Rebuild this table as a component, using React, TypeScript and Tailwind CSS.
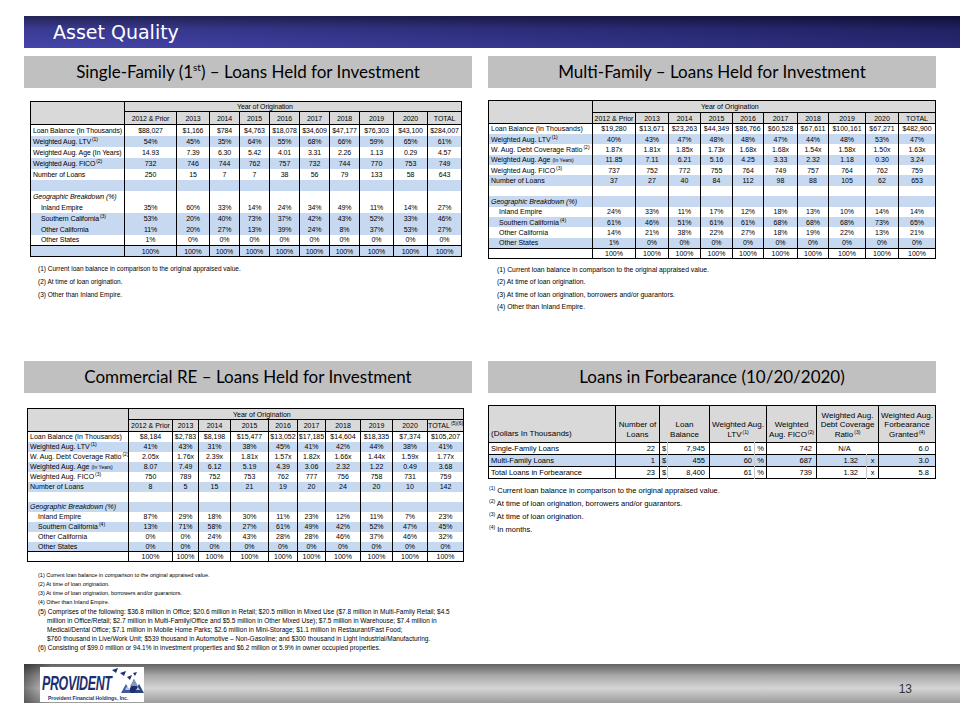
import type { ReactNode } from "react";

type VintageRow = {
  label: ReactNode;
  values: string[];
  blue?: boolean;
  indent?: boolean;
  italic?: boolean;
  total?: boolean;
};

const YEARS = ["2012 & Prior", "2013", "2014", "2015", "2016", "2017", "2018", "2019", "2020"];
const EMPTY = Array(10).fill("");
const FULL = Array(10).fill("100%");
const ZEROS = ["1%", "0%", "0%", "0%", "0%", "0%", "0%", "0%", "0%", "0%"];

function Sup({ children }: { children: ReactNode }) {
  return <sup className="top-[-3px] ml-px text-[5px]">{children}</sup>;
}

function SectionHeader({ children }: { children: ReactNode }) {
  return (
    <div className="flex h-8 items-center justify-center bg-[#c0c0c0] font-['Lato',sans-serif] text-[17px] text-black">
      {children}
    </div>
  );
}

function VintageTable({
  cols,
  rows,
  total,
  tableClass,
  head1,
  head2,
  rowH,
  yearPad,
}: {
  cols: string[];
  rows: VintageRow[];
  total: ReactNode;
  tableClass: string;
  head1: string;
  head2: string;
  rowH: string;
  yearPad: string;
}) {
  return (
    <table className={`table-fixed border-collapse border border-black leading-none ${tableClass}`}>
      <colgroup>
        {cols.map((c, i) => (
          <col key={i} className={c} />
        ))}
      </colgroup>
      <tbody>
        <tr className={`${head1} bg-[#d9d9d9]`}>
          <td rowSpan={2} className="border-r border-b border-black p-0" />
          <td colSpan={10} className={`border-b border-black p-0 text-left whitespace-nowrap ${yearPad}`}>
            Year of Origination
          </td>
        </tr>
        <tr className={`${head2} bg-[#d9d9d9]`}>
          {[...YEARS, total].map((y, i) => (
            <td key={i} className="border-l border-b border-black p-0 text-center whitespace-nowrap">
              {y}
            </td>
          ))}
        </tr>
        {rows.map((r, i) => (
          <tr key={i} className={`${rowH} ${r.blue ? "bg-[#c6d9f1]" : "bg-white"}`}>
            <td
              className={`overflow-hidden whitespace-nowrap p-0 ${r.indent ? "pl-[10px]" : "pl-[2px]"} ${
                r.italic ? "italic" : ""
              } ${r.total ? "border-t border-black" : ""}`}
            >
              {r.label}
            </td>
            {r.values.map((v, j) => (
              <td
                key={j}
                className={`border-l border-black p-0 text-center whitespace-nowrap ${r.total ? "border-t" : ""}`}
              >
                {v}
              </td>
            ))}
          </tr>
        ))}
      </tbody>
    </table>
  );
}

const sfRows: VintageRow[] = [
  {
    label: "Loan Balance (In Thousands)",
    values: ["$88,027", "$1,166", "$784", "$4,763", "$18,078", "$34,609", "$47,177", "$76,303", "$43,100", "$284,007"],
  },
  {
    label: (
      <>
        Weighted Aug. LTV<Sup>(1)</Sup>
      </>
    ),
    values: ["54%", "45%", "35%", "64%", "55%", "68%", "66%", "59%", "65%", "61%"],
    blue: true,
  },
  {
    label: "Weighted Aug. Age (In Years)",
    values: ["14.93", "7.39", "6.30", "5.42", "4.01", "3.31", "2.26", "1.13", "0.29", "4.57"],
  },
  {
    label: (
      <>
        Weighted Aug. FICO<Sup>(2)</Sup>
      </>
    ),
    values: ["732", "746", "744", "762", "757", "732", "744", "770", "753", "749"],
    blue: true,
  },
  { label: "Number of Loans", values: ["250", "15", "7", "7", "38", "56", "79", "133", "58", "643"] },
  { label: "", values: EMPTY, blue: true },
  { label: "Geographic Breakdown (%)", values: EMPTY, italic: true },
  {
    label: "Inland Empire",
    values: ["35%", "60%", "33%", "14%", "24%", "34%", "49%", "11%", "14%", "27%"],
    indent: true,
  },
  {
    label: (
      <>
        Southern California<Sup>(3)</Sup>
      </>
    ),
    values: ["53%", "20%", "40%", "73%", "37%", "42%", "43%", "52%", "33%", "46%"],
    indent: true,
    blue: true,
  },
  {
    label: "Other California",
    values: ["11%", "20%", "27%", "13%", "39%", "24%", "8%", "37%", "53%", "27%"],
    indent: true,
    blue: true,
  },
  { label: "Other States", values: ZEROS, indent: true },
  { label: "", values: FULL, blue: true, total: true },
];

const ageLabel = (
  <>
    Weighted Aug. Age <span className="text-[5px]">(In Years)</span>
  </>
);

const mfRows: VintageRow[] = [
  {
    label: "Loan Balance (In Thousands)",
    values: ["$19,280", "$13,671", "$23,263", "$44,349", "$86,766", "$60,528", "$67,611", "$100,161", "$67,271", "$482,900"],
  },
  {
    label: (
      <>
        Weighted Aug. LTV<Sup>(1)</Sup>
      </>
    ),
    values: ["40%", "43%", "47%", "48%", "48%", "47%", "44%", "48%", "53%", "47%"],
    blue: true,
  },
  {
    label: (
      <>
        W. Aug. Debt Coverage Ratio<Sup>(2)</Sup>
      </>
    ),
    values: ["1.87x", "1.81x", "1.85x", "1.73x", "1.68x", "1.68x", "1.54x", "1.58x", "1.50x", "1.63x"],
  },
  {
    label: ageLabel,
    values: ["11.85", "7.11", "6.21", "5.16", "4.25", "3.33", "2.32", "1.18", "0.30", "3.24"],
    blue: true,
  },
  {
    label: (
      <>
        Weighted Aug. FICO<Sup>(3)</Sup>
      </>
    ),
    values: ["737", "752", "772", "755", "764", "749", "757", "764", "762", "759"],
  },
  { label: "Number of Loans", values: ["37", "27", "40", "84", "112", "98", "88", "105", "62", "653"], blue: true },
  { label: "", values: EMPTY },
  { label: "Geographic Breakdown (%)", values: EMPTY, italic: true, blue: true },
  {
    label: "Inland Empire",
    values: ["24%", "33%", "11%", "17%", "12%", "18%", "13%", "10%", "14%", "14%"],
    indent: true,
  },
  {
    label: (
      <>
        Southern California<Sup>(4)</Sup>
      </>
    ),
    values: ["61%", "46%", "51%", "61%", "61%", "68%", "68%", "68%", "73%", "65%"],
    indent: true,
    blue: true,
  },
  {
    label: "Other California",
    values: ["14%", "21%", "38%", "22%", "27%", "18%", "19%", "22%", "13%", "21%"],
    indent: true,
  },
  { label: "Other States", values: ZEROS, indent: true, blue: true },
  { label: "", values: FULL, total: true },
];

const creRows: VintageRow[] = [
  {
    label: "Loan Balance (In Thousands)",
    values: ["$8,184", "$2,783", "$8,198", "$15,477", "$13,052", "$17,185", "$14,604", "$18,335", "$7,374", "$105,207"],
  },
  {
    label: (
      <>
        Weighted Aug. LTV<Sup>(1)</Sup>
      </>
    ),
    values: ["41%", "43%", "31%", "38%", "45%", "41%", "42%", "44%", "38%", "41%"],
    blue: true,
  },
  {
    label: (
      <>
        W. Aug. Debt Coverage Ratio<Sup>(2)</Sup>
      </>
    ),
    values: ["2.05x", "1.76x", "2.39x", "1.81x", "1.57x", "1.82x", "1.66x", "1.44x", "1.59x", "1.77x"],
  },
  {
    label: ageLabel,
    values: ["8.07", "7.49", "6.12", "5.19", "4.39", "3.06", "2.32", "1.22", "0.49", "3.68"],
    blue: true,
  },
  {
    label: (
      <>
        Weighted Aug. FICO<Sup>(3)</Sup>
      </>
    ),
    values: ["750", "789", "752", "753", "762", "777", "756", "758", "731", "759"],
  },
  { label: "Number of Loans", values: ["8", "5", "15", "21", "19", "20", "24", "20", "10", "142"], blue: true },
  { label: "", values: EMPTY },
  { label: "Geographic Breakdown (%)", values: EMPTY, italic: true, blue: true },
  {
    label: "Inland Empire",
    values: ["87%", "29%", "18%", "30%", "11%", "23%", "12%", "11%", "7%", "23%"],
    indent: true,
  },
  {
    label: (
      <>
        Southern California<Sup>(4)</Sup>
      </>
    ),
    values: ["13%", "71%", "58%", "27%", "61%", "49%", "42%", "52%", "47%", "45%"],
    indent: true,
    blue: true,
  },
  {
    label: "Other California",
    values: ["0%", "0%", "24%", "43%", "28%", "28%", "46%", "37%", "46%", "32%"],
    indent: true,
  },
  {
    label: "Other States",
    values: ["0%", "0%", "0%", "0%", "0%", "0%", "0%", "0%", "0%", "0%"],
    indent: true,
    blue: true,
  },
  { label: "", values: FULL, total: true },
];

type FbRow = {
  label: string;
  n: string;
  bal: string;
  ltv: string;
  fico: string;
  dcr: string;
  fb: string;
  blue?: boolean;
};

const fbRows: FbRow[] = [
  { label: "Single-Family Loans", n: "22", bal: "7,945", ltv: "61", fico: "742", dcr: "N/A", fb: "6.0" },
  { label: "Multi-Family Loans", n: "1", bal: "455", ltv: "60", fico: "687", dcr: "1.32", fb: "3.0", blue: true },
  { label: "Total Loans in Forbearance", n: "23", bal: "8,400", ltv: "61", fico: "739", dcr: "1.32", fb: "5.8" },
];

function ForbearanceTable() {
  return (
    <table className="w-[447px] table-fixed border-collapse border border-black leading-none">
      <colgroup>
        <col className="w-[127px]" />
        <col className="w-[44px]" />
        <col className="w-[8px]" />
        <col className="w-[42px]" />
        <col className="w-[45px]" />
        <col className="w-[12px]" />
        <col className="w-[50px]" />
        <col className="w-[50px]" />
        <col className="w-[12px]" />
        <col className="w-[57px]" />
      </colgroup>
      <tbody>
        <tr className="h-[37px] bg-[#d9d9d9] text-[8px] leading-[9.5px]">
          <td className="p-0 pb-[4px] pl-[2px] align-bottom">(Dollars In Thousands)</td>
          <td className="border-l border-black p-0 pb-[3px] text-center align-bottom">
            Number of
            <br />
            Loans
          </td>
          <td colSpan={2} className="border-l border-black p-0 pb-[3px] text-center align-bottom">
            Loan
            <br />
            Balance
          </td>
          <td colSpan={2} className="border-l border-black p-0 pb-[3px] text-center align-bottom">
            Weighted Aug.
            <br />
            LTV<Sup>(1)</Sup>
          </td>
          <td className="border-l border-black p-0 pb-[3px] text-center align-bottom">
            Weighted
            <br />
            Aug. FICO<Sup>(2)</Sup>
          </td>
          <td colSpan={2} className="border-l border-black p-0 pb-[3px] text-center align-bottom">
            Weighted Aug.
            <br />
            Debt Coverage
            <br />
            Ratio<Sup>(3)</Sup>
          </td>
          <td className="border-l border-black p-0 pb-[3px] text-center align-bottom">
            Weighted Aug.
            <br />
            Forbearance
            <br />
            Granted<Sup>(4)</Sup>
          </td>
        </tr>
        {fbRows.map((r) => (
          <tr key={r.label} className={`h-[12px] border-t border-black text-[7.5px] ${r.blue ? "bg-[#c6d9f1]" : "bg-white"}`}>
            <td className="whitespace-nowrap p-0 pl-[2px]">{r.label}</td>
            <td className="border-l border-black p-0 pr-[4px] text-right">{r.n}</td>
            <td className="border-l border-black p-0 pl-[2px] text-left">$</td>
            <td className="border-l border-[#c8c8c8] p-0 pr-[4px] text-right">{r.bal}</td>
            <td className="border-l border-black p-0 pr-[2px] text-right">{r.ltv}</td>
            <td className="border-l border-[#c8c8c8] p-0 text-center">%</td>
            <td className="border-l border-black p-0 pr-[4px] text-right">{r.fico}</td>
            {r.dcr === "N/A" ? (
              <td colSpan={2} className="border-l border-black p-0 pr-[6px] text-center">
                N/A
              </td>
            ) : (
              <>
                <td className="border-l border-black p-0 pr-[8px] text-right">{r.dcr}</td>
                <td className="border-l border-[#c8c8c8] p-0 text-center">x</td>
              </>
            )}
            <td className="border-l border-black p-0 pr-[6px] text-right">{r.fb}</td>
          </tr>
        ))}
      </tbody>
    </table>
  );
}

function Logo() {
  return (
    <div className="relative mt-[3px] flex h-[35px] w-[104px] flex-col bg-white">
      <div className="flex h-[26px] items-end">
        <span className="ml-[2px] inline-block origin-left scale-x-[0.62] whitespace-nowrap text-[20px] font-black italic leading-none tracking-[-0.5px] text-[#1d2f6f]">
          PROVIDENT
        </span>
      </div>
      <svg className="absolute left-[72px] top-[1px]" width="32" height="26" viewBox="0 0 32 26">
        <polygon points="0,2 6,0 4,5" fill="#1d2f6f" />
        <polygon points="8,5 14,3 12,8" fill="#1d2f6f" />
        <polygon points="15,9 20,7 18,12" fill="#1d2f6f" />
        <polygon points="21,5 25,4 23,8" fill="#1d2f6f" />
        <polygon points="16,25 22,11 28,25" fill="#1d2f6f" />
        <polygon points="9,25 14,16 19,25" fill="#3e5a9e" />
        <polygon points="22,25 27,16 32,25" fill="#2a447f" />
        <polygon points="18,18 22,11 26,18" fill="#7f98c8" />
        <polygon points="13,22 15,18 18,22" fill="#b7c6e2" />
        <polygon points="24,22 26,19 28,22" fill="#b7c6e2" />
      </svg>
      <div className="ml-[8px] mt-[3px] whitespace-nowrap text-[5px] font-bold leading-none text-[#1d2f6f]">
        Provident Financial Holdings, Inc.
      </div>
    </div>
  );
}

export default function App() {
  return (
    <div className="flex h-[720px] w-[960px] flex-col overflow-hidden bg-white font-['Liberation_Sans',Arial,sans-serif] text-black">
      <div className="ml-6 mt-4 flex h-8 items-center bg-[linear-gradient(to_right,rgba(255,255,255,0.06),rgba(0,0,0,0.3)),linear-gradient(to_bottom,#17174c,#2e2e8c_40%,#3a3aa6)] pl-[29px]">
        <h1 className="font-['DejaVu_Sans',sans-serif] text-[19px] leading-none text-white">Asset Quality</h1>
      </div>

      <div className="mx-6 mt-2 grid grid-cols-2 grid-rows-[305px_auto] gap-x-4">
        <section className="flex flex-col">
          <SectionHeader>
            Single-Family (1<sup className="text-[10px]">st</sup>) – Loans Held for Investment
          </SectionHeader>
          <div className="ml-[6px] mt-[13px]">
            <VintageTable
              cols={[
                "w-[94px]",
                "w-[52px]",
                "w-[33px]",
                "w-[30px]",
                "w-[30px]",
                "w-[30px]",
                "w-[30px]",
                "w-[30px]",
                "w-[34px]",
                "w-[34px]",
                "w-[34px]",
              ]}
              rows={sfRows}
              total="TOTAL"
              tableClass="w-[431px] text-[7px] tracking-[-0.1px]"
              head1="h-[10px]"
              head2="h-[13px]"
              rowH="h-[11px]"
              yearPad="pl-[112px]"
            />
          </div>
          <div className="ml-[14px] mt-[5px] text-[6.5px] leading-[13px]">
            <p>(1) Current loan balance in comparison to the original appraised value.</p>
            <p>(2) At time of loan origination.</p>
            <p>(3) Other than Inland Empire.</p>
          </div>
        </section>

        <section className="flex flex-col">
          <SectionHeader>Multi-Family – Loans Held for Investment</SectionHeader>
          <div className="mt-[12px]">
            <VintageTable
              cols={[
                "w-[104px]",
                "w-[43px]",
                "w-[33px]",
                "w-[32px]",
                "w-[32px]",
                "w-[31px]",
                "w-[34px]",
                "w-[31px]",
                "w-[37px]",
                "w-[33px]",
                "w-[37px]",
              ]}
              rows={mfRows}
              total="TOTAL"
              tableClass="w-[447px] text-[7px]"
              head1="h-[12px]"
              head2="h-[11px]"
              rowH="h-[10.4px]"
              yearPad="pl-[108px]"
            />
          </div>
          <div className="ml-[9px] mt-[5px] text-[6.8px] leading-[12.3px]">
            <p>(1) Current loan balance in comparison to the original appraised value.</p>
            <p>(2) At time of loan origination.</p>
            <p>(3) At time of loan origination, borrowers and/or guarantors.</p>
            <p>(4) Other than Inland Empire.</p>
          </div>
        </section>

        <section className="flex flex-col">
          <SectionHeader>Commercial RE – Loans Held for Investment</SectionHeader>
          <div className="ml-[3px] mt-[15px]">
            <VintageTable
              cols={[
                "w-[101px]",
                "w-[44px]",
                "w-[26px]",
                "w-[32px]",
                "w-[38px]",
                "w-[29px]",
                "w-[28px]",
                "w-[35px]",
                "w-[32px]",
                "w-[35px]",
                "w-[36px]",
              ]}
              rows={creRows}
              total={
                <>
                  TOTAL<Sup>(5)(6)</Sup>
                </>
              }
              tableClass="w-[436px] text-[7px]"
              head1="h-[11px]"
              head2="h-[12px]"
              rowH="h-[10px]"
              yearPad="pl-[104px]"
            />
          </div>
          <div className="ml-[14px] mt-[9px] leading-[9px]">
            <div className="text-[5.5px]">
              <p>(1) Current loan balance in comparison to the original appraised value.</p>
              <p>(2) At time of loan origination.</p>
              <p>(3) At time of loan origination, borrowers and/or guarantors.</p>
              <p>(4) Other than Inland Empire.</p>
            </div>
            <div className="text-[6.5px]">
              <p className="whitespace-nowrap">
                (5) Comprises of the following: $36.8 million in Office; $20.6 million in Retail; $20.5 million in
                Mixed Use ($7.8 million in Multi-Family Retail; $4.5
              </p>
              <p className="whitespace-nowrap pl-[9px]">
                million in Office/Retail; $2.7 million in Multi-Family/Office and $5.5 million in Other Mixed Use); $7.5
                million in Warehouse; $7.4 million in
              </p>
              <p className="whitespace-nowrap pl-[9px]">
                Medical/Dental Office; $7.1 million in Mobile Home Parks; $2.6 million in Mini-Storage; $1.1 million in
                Restaurant/Fast Food;
              </p>
              <p className="whitespace-nowrap pl-[9px]">
                $760 thousand in Live/Work Unit; $539 thousand in Automotive – Non-Gasoline; and $300 thousand in Light
                Industrial/Manufacturing.
              </p>
              <p className="whitespace-nowrap">
                (6) Consisting of $99.0 million or 94.1% in investment properties and $6.2 million or 5.9% in owner
                occupied properties.
              </p>
            </div>
          </div>
        </section>

        <section className="flex flex-col">
          <SectionHeader>Loans in Forbearance (10/20/2020)</SectionHeader>
          <div className="mt-[12px]">
            <ForbearanceTable />
          </div>
          <div className="mt-[5px] text-[7.5px] leading-[13px]">
            <p>
              <Sup>(1)</Sup> Current loan balance in comparison to the original appraised value.
            </p>
            <p>
              <Sup>(2)</Sup> At time of loan origination, borrowers and/or guarantors.
            </p>
            <p>
              <Sup>(3)</Sup> At time of loan origination.
            </p>
            <p>
              <Sup>(4)</Sup> In months.
            </p>
          </div>
        </section>
      </div>

      <footer className="mb-[17px] ml-6 mt-auto flex h-[39px] items-start bg-[linear-gradient(to_right,rgba(0,0,0,0.45),rgba(0,0,0,0)_3%),linear-gradient(to_bottom,#626262,#a9a9a9_30%,#d4d4d4_62%,#9c9c9c)] pl-4">
        <Logo />
        <span className="ml-auto mr-[48px] mt-[19px] text-[12px] leading-none text-[#333]">13</span>
      </footer>
    </div>
  );
}
